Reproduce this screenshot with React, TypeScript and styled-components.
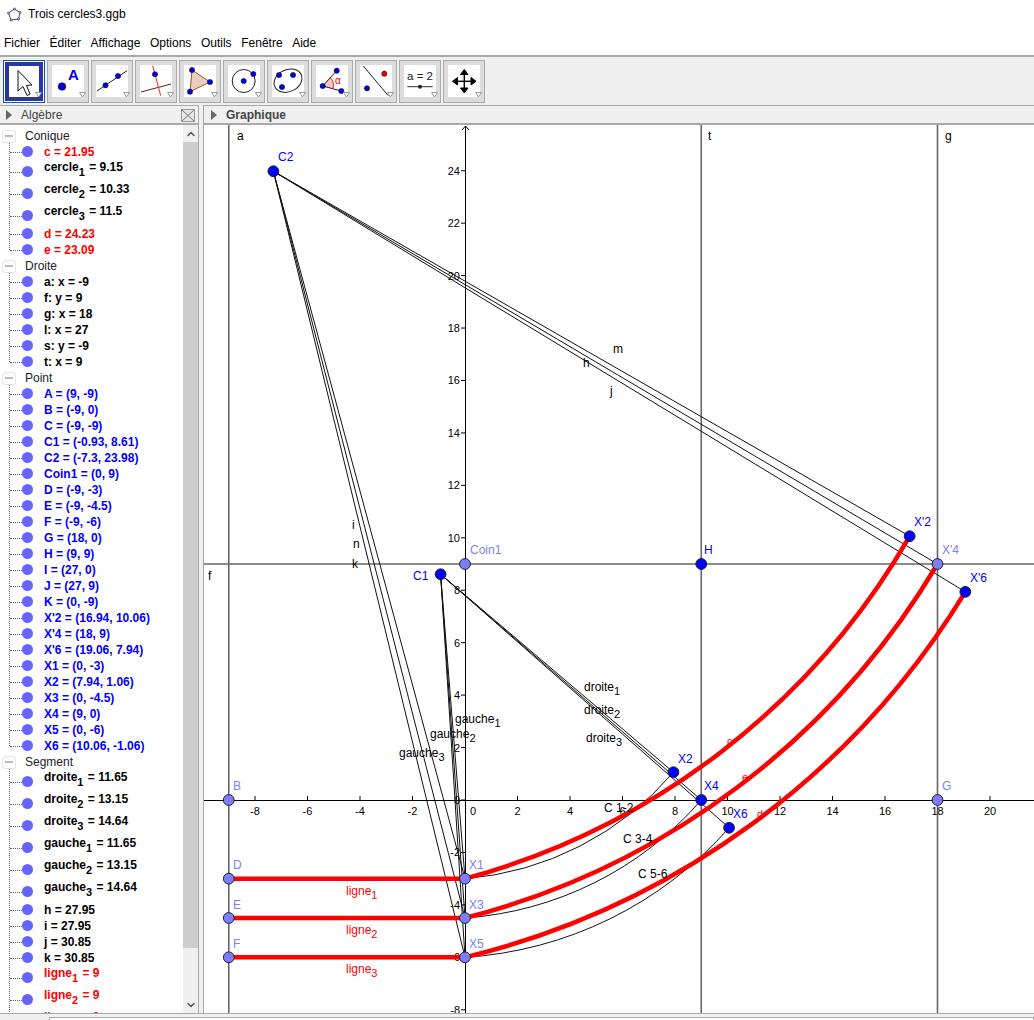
import { type FC, type ReactNode } from "react";
import styled, { createGlobalStyle } from "styled-components";
import { ChevronDown, ChevronUp } from "lucide-react";

const GlobalStyle = createGlobalStyle`
  html, body {
    margin: 0;
    padding: 0;
    background: #fff;
    overflow: hidden;
  }
  * { box-sizing: border-box; }
`;

const Window = styled.div`
  width: 1034px;
  height: 1020px;
  display: flex;
  flex-direction: column;
  font-family: "Liberation Sans", Arial, sans-serif;
  font-size: 12px;
  color: #000;
  overflow: hidden;
`;

const TitleBar = styled.div`
  height: 28px;
  padding: 0 0 0 7px;
  display: flex;
  align-items: center;
  gap: 6px;
  background: #fff;
`;

const MenuBar = styled.div`
  height: 27px;
  padding: 2px 0 0 4px;
  display: flex;
  align-items: center;
  gap: 9.6px;
  background: #fff;
`;

const Toolbar = styled.div`
  height: 50px;
  padding: 3px 0 0 3px;
  display: flex;
  gap: 2px;
  background: #f0f0f0;
  border-top: 2px solid #a9a9a9;
`;

const ToolButton = styled.div<{ $selected?: boolean }>`
  width: 42px;
  height: 43px;
  padding: 4px;
  background: ${(p) => (p.$selected ? "#fff" : "#dcdcdc")};
  border: 1px solid ${(p) => (p.$selected ? "#0a5a9c" : "#aaa")};
  ${(p) => p.$selected && "box-shadow: inset 0 0 0 1px #fff, inset 0 0 0 5px #2b35a8;"}

  svg {
    display: block;
    width: 32px;
    height: 32px;
    overflow: visible;
    background: ${(p) => (p.$selected ? "transparent" : "#fff")};
  }
`;

const Panels = styled.div`
  flex: 1;
  min-height: 0;
  display: flex;
  background: #f0f0f0;
`;

const AlgebraPanel = styled.div`
  width: 199px;
  display: flex;
  flex-direction: column;
  border-right: 1px solid #a9a9a9;
`;

const GraphicPanel = styled.div`
  flex: 1;
  margin-left: 4px;
  display: flex;
  flex-direction: column;
  border-left: 1px solid #a9a9a9;
  min-width: 0;
`;

const PanelHeader = styled.div<{ $indent: number; $bold?: boolean }>`
  height: 20px;
  padding: 1px 0 0 ${(p) => p.$indent}px;
  display: flex;
  align-items: center;
  gap: 9px;
  flex-shrink: 0;
  background: #f0f0f0;
  color: #444;
  font-weight: ${(p) => (p.$bold ? "bold" : "normal")};
  border-top: 1px solid #a9a9a9;
  border-bottom: 2px solid #a9a9a9;
`;

const Caret = styled.span`
  width: 0;
  height: 0;
  border-top: 5px solid transparent;
  border-bottom: 5px solid transparent;
  border-left: 6px solid #666;
`;

const CloseBox = styled.span`
  margin-left: auto;
  margin-right: 3px;
  width: 14px;
  height: 13px;
  border: 1px solid #999;
  background: #e6e6e6;
  display: flex;

  svg { width: 12px; height: 11px; }
`;

const AlgebraBody = styled.div`
  flex: 1;
  min-height: 0;
  display: flex;
  background: #fff;
`;

const Tree = styled.div`
  flex: 1;
  padding-top: 3px;
  overflow: hidden;
`;

const Group = styled.div<{ $open?: boolean }>`
  position: relative;

  &::before {
    content: "";
    position: absolute;
    left: 9px;
    top: 14px;
    bottom: ${(p) => (p.$open ? "0" : "8px")};
    border-left: 1px dotted #666;
  }
`;

const GroupRow = styled.div`
  height: 16px;
  display: flex;
  align-items: center;
  padding-left: 2px;
  color: #222;
`;

const Toggle = styled.span`
  position: relative;
  width: 14px;
  height: 13px;
  margin-right: 9px;
  background: #fff;
  border: 1px solid #e4e4e4;
  border-radius: 3px;
  display: flex;
  align-items: center;
  justify-content: center;

  &::after {
    content: "";
    width: 8px;
    height: 2px;
    background: #bbb;
  }
`;

const Row = styled.div<{ $tall?: boolean }>`
  height: ${(p) => (p.$tall ? 22 : 16)}px;
  padding-left: 10px;
  display: flex;
  align-items: flex-start;
`;

const Connector = styled.span<{ $tall?: boolean }>`
  width: 12px;
  margin-top: ${(p) => (p.$tall ? 12 : 8)}px;
  border-top: 1px dotted #666;
`;

const Bullet = styled.span<{ $tall?: boolean }>`
  width: 11px;
  height: 11px;
  margin-top: ${(p) => (p.$tall ? 6 : 2)}px;
  border-radius: 50%;
  background: #6464ff;
  flex-shrink: 0;
`;

const RowLabel = styled.span<{ $color: string; $tall?: boolean }>`
  margin: ${(p) => (p.$tall ? "-1px" : "0")} 0 0 11px;
  line-height: 16px;
  font-weight: bold;
  white-space: nowrap;
  color: ${(p) => p.$color};

  sub {
    font-size: 11px;
    line-height: 0;
    vertical-align: -5px;
    margin-right: 1px;
  }
`;

const ScrollTrack = styled.div`
  width: 15px;
  flex-shrink: 0;
  display: flex;
  flex-direction: column;
  background: #f0f0f0;
`;

const ScrollArrow = styled.div<{ $end?: boolean }>`
  height: 17px;
  display: flex;
  align-items: center;
  justify-content: center;
  margin-top: ${(p) => (p.$end ? "auto" : "0")};
  color: #555;
`;

const ScrollThumb = styled.div`
  height: 806px;
  background: #cdcdcd;
`;

const Canvas = styled.svg`
  display: block;
  flex: 1;
  min-height: 0;
  width: 100%;
  background: #fff;
  font-family: "Liberation Sans", Arial, sans-serif;
  font-size: 12px;
`;

const BottomBar = styled.div`
  height: 7px;
  flex-shrink: 0;
  padding: 3px 0 0 49px;
  background: #f0f0f0;
  border-top: 1px solid #a9a9a9;
`;

const InputField = styled.div`
  height: 100%;
  background: #fff;
  border: 1px solid #aaa;
  border-bottom: none;
`;

const BLACK = "#000";
const RED = "#ff0000";
const BLUE = "#0000ff";

type Item = { text: string; sub?: string; rest?: string; color: string };

const plain = (text: string, color: string): Item => ({ text, color });
const indexed = (text: string, sub: string, rest: string, color: string): Item => ({ text, sub, rest, color });

const groups: { title: string; open?: boolean; items: Item[] }[] = [
  {
    title: "Conique",
    items: [
      plain("c = 21.95", RED),
      indexed("cercle", "1", " = 9.15", BLACK),
      indexed("cercle", "2", " = 10.33", BLACK),
      indexed("cercle", "3", " = 11.5", BLACK),
      plain("d = 24.23", RED),
      plain("e = 23.09", RED),
    ],
  },
  {
    title: "Droite",
    items: ["a: x = -9", "f: y = 9", "g: x = 18", "l: x = 27", "s: y = -9", "t: x = 9"].map((t) => plain(t, BLACK)),
  },
  {
    title: "Point",
    items: [
      "A = (9, -9)", "B = (-9, 0)", "C = (-9, -9)", "C1 = (-0.93, 8.61)", "C2 = (-7.3, 23.98)",
      "Coin1 = (0, 9)", "D = (-9, -3)", "E = (-9, -4.5)", "F = (-9, -6)", "G = (18, 0)",
      "H = (9, 9)", "I = (27, 0)", "J = (27, 9)", "K = (0, -9)", "X'2 = (16.94, 10.06)",
      "X'4 = (18, 9)", "X'6 = (19.06, 7.94)", "X1 = (0, -3)", "X2 = (7.94, 1.06)", "X3 = (0, -4.5)",
      "X4 = (9, 0)", "X5 = (0, -6)", "X6 = (10.06, -1.06)",
    ].map((t) => plain(t, BLUE)),
  },
  {
    title: "Segment",
    open: true,
    items: [
      indexed("droite", "1", " = 11.65", BLACK),
      indexed("droite", "2", " = 13.15", BLACK),
      indexed("droite", "3", " = 14.64", BLACK),
      indexed("gauche", "1", " = 11.65", BLACK),
      indexed("gauche", "2", " = 13.15", BLACK),
      indexed("gauche", "3", " = 14.64", BLACK),
      plain("h = 27.95", BLACK),
      plain("i = 27.95", BLACK),
      plain("j = 30.85", BLACK),
      plain("k = 30.85", BLACK),
      indexed("ligne", "1", " = 9", RED),
      indexed("ligne", "2", " = 9", RED),
      indexed("ligne", "3", " = 9", RED),
    ],
  },
];

const ToolDot: FC<{ x: number; y: number; r?: number; fill?: string }> = ({ x, y, r = 2.6, fill = "#0000e6" }) => (
  <circle cx={x} cy={y} r={r} fill={fill} stroke="#111" strokeWidth={0.6} />
);

const toolIcons: ReactNode[] = [
  <polygon key="move" points="10,5.5 10,26 15,21.5 19,30.5 22,29 18.5,20.5 24,20" fill="#fff" stroke="#111" strokeWidth={1} />,
  <g key="point">
    <ToolDot x={10} y={21.5} r={3.8} />
    <text x={16} y={15} fill="#0000ff" fontSize={15} fontWeight="bold" fontFamily="Liberation Sans">A</text>
  </g>,
  <g key="line">
    <line x1={1} y1={26} x2={31} y2={5.7} stroke="#222" />
    <ToolDot x={9.5} y={20.3} />
    <ToolDot x={22} y={11} />
  </g>,
  <g key="perp">
    <line x1={1} y1={27} x2={31} y2={19} stroke="#522" />
    <line x1={12.7} y1={0.7} x2={20.7} y2={30.7} stroke="#f22" />
    <ToolDot x={15} y={9.3} />
  </g>,
  <g key="polygon">
    <polygon points="8,5 26,17 6,26.7" fill="#e9cdbd" stroke="#a0522d" />
    <ToolDot x={8} y={5} />
    <ToolDot x={26} y={17} />
    <ToolDot x={6} y={26.7} />
  </g>,
  <g key="circle">
    <circle cx={15.7} cy={16} r={11.5} fill="none" stroke="#222" />
    <ToolDot x={15.7} y={16} />
    <ToolDot x={25.3} y={9} />
  </g>,
  <g key="conic">
    <ellipse cx={16} cy={15.7} rx={14.5} ry={11} transform="rotate(-25 16 15.7)" fill="none" stroke="#222" />
    <ToolDot x={7} y={10} />
    <ToolDot x={21} y={10} />
    <ToolDot x={10} y={22} />
  </g>,
  <g key="angle">
    <path d="M6.7 21 L14 12.5 A 11 11 0 0 1 17 23.8 Z" fill="#f6c4c4" />
    <path d="M20.7 5.7 L6.7 21 L25.3 26" fill="none" stroke="#222" />
    <path d="M14 12.5 A 11 11 0 0 1 17 23.8" fill="none" stroke="#f22" />
    <text x={19} y={19} fill="#e00" fontSize={10} fontFamily="Liberation Sans">α</text>
    <ToolDot x={6.7} y={21} />
    <ToolDot x={20.7} y={5.7} />
    <ToolDot x={25.3} y={26} />
  </g>,
  <g key="relation">
    <line x1={3.3} y1={1} x2={28.3} y2={30.7} stroke="#222" />
    <ToolDot x={24.3} y={8.7} fill="#e00" />
    <ToolDot x={7} y={23.3} />
  </g>,
  <g key="slider">
    <text x={16} y={15} textAnchor="middle" fill="#222" fontSize={11.5} fontFamily="Liberation Sans">a = 2</text>
    <line x1={3.3} y1={21.7} x2={28.7} y2={21.7} stroke="#333" />
    <circle cx={16} cy={21.7} r={2} fill="#222" />
  </g>,
  <g key="pan" fill="#000" stroke="#000">
    <line x1={16.3} y1={7} x2={16.3} y2={26} strokeWidth={1.4} />
    <line x1={7} y1={16.3} x2={26} y2={16.3} strokeWidth={1.4} />
    <polygon points="16.3,4.5 12.5,9.5 20,9.5" />
    <polygon points="16.3,28 12.5,23 20,23" />
    <polygon points="4.5,16.3 9.5,12.5 9.5,20" />
    <polygon points="28,16.3 23,12.5 23,20" />
  </g>,
];

// GeoGebra view: 26.25 px for one unit, origin at (465, 800)
const sx = (x: number) => 465 + 26.25 * x;
const sy = (y: number) => 800 - 26.22 * y;

type Pt = { x: number; y: number };
const at = (x: number, y: number): Pt => ({ x: sx(x), y: sy(y) });

const C1 = at(-0.93, 8.61);
const C2 = at(-7.3, 23.98);
const X1 = at(0, -3);
const X2 = at(7.94, 1.06);
const X3 = at(0, -4.5);
const X4 = at(9, 0);
const X5 = at(0, -6);
const X6 = at(10.06, -1.06);
const XP2 = at(16.94, 10.06);
const XP4 = at(18, 9);
const XP6 = at(19.06, 7.94);
const D = at(-9, -3);
const E = at(-9, -4.5);
const F = at(-9, -6);

const dist = (a: Pt, b: Pt) => Math.hypot(a.x - b.x, a.y - b.y);
const arc = (from: Pt, to: Pt, center: Pt) => {
  const r = dist(from, center);
  return `M${from.x} ${from.y} A${r} ${r} 0 0 0 ${to.x} ${to.y}`;
};

const thinLines: [Pt, Pt][] = [
  [C2, XP2], [C2, XP4], [C2, XP6], [C2, X1], [C2, X3], [C2, X5],
  [C1, X2], [C1, X4], [C1, X6], [C1, X1], [C1, X3], [C1, X5],
];

const points: { p: Pt; free?: boolean; label: string; lx: number; ly: number }[] = [
  { p: at(-9, 0), label: "B", lx: 233, ly: 790 },
  { p: D, label: "D", lx: 233, ly: 869 },
  { p: E, label: "E", lx: 233, ly: 909 },
  { p: F, label: "F", lx: 233, ly: 948 },
  { p: X1, label: "X1", lx: 469, ly: 869 },
  { p: X3, label: "X3", lx: 469, ly: 909 },
  { p: X5, label: "X5", lx: 469, ly: 948 },
  { p: at(18, 0), label: "G", lx: 942, ly: 790 },
  { p: at(0, 9), label: "Coin1", lx: 470, ly: 554 },
  { p: XP4, label: "X'4", lx: 942, ly: 554 },
  { p: at(9, 9), free: true, label: "H", lx: 704, ly: 554 },
  { p: C1, free: true, label: "C1", lx: 413, ly: 580 },
  { p: C2, free: true, label: "C2", lx: 278, ly: 161 },
  { p: X2, free: true, label: "X2", lx: 678, ly: 763 },
  { p: X4, free: true, label: "X4", lx: 704, ly: 790 },
  { p: X6, free: true, label: "X6", lx: 733, ly: 818 },
  { p: XP2, free: true, label: "X'2", lx: 914, ly: 526 },
  { p: XP6, free: true, label: "X'6", lx: 970, ly: 582 },
];

const blackLabels: [string, number, number][] = [
  ["a", 237, 140], ["t", 708, 140], ["g", 945, 140], ["f", 208, 580],
  ["m", 613, 353], ["h", 583, 367], ["j", 610, 395],
  ["i", 352, 529], ["n", 353, 548], ["k", 352, 568],
  ["C 1-2", 604, 812], ["C 3-4", 623, 843], ["C 5-6", 638, 878],
];

const subLabels: { name: string; sub: string; x: number; y: number; color: string }[] = [
  { name: "droite", sub: "1", x: 584, y: 691, color: "#000" },
  { name: "droite", sub: "2", x: 584, y: 714, color: "#000" },
  { name: "droite", sub: "3", x: 586, y: 742, color: "#000" },
  { name: "gauche", sub: "1", x: 455, y: 723, color: "#000" },
  { name: "gauche", sub: "2", x: 430, y: 738, color: "#000" },
  { name: "gauche", sub: "3", x: 399, y: 757, color: "#000" },
  { name: "ligne", sub: "1", x: 346, y: 895, color: "#f00" },
  { name: "ligne", sub: "2", x: 346, y: 934, color: "#f00" },
  { name: "ligne", sub: "3", x: 346, y: 973, color: "#f00" },
];

const xTicks = [-8, -6, -4, -2, 2, 4, 6, 8, 10, 12, 14, 16, 18, 20];
const yTicks = [24, 22, 20, 18, 16, 14, 12, 10, 8, 6, 4, 2, 0, -2, -4, -6, -8];

const Graph: FC = () => (
  <Canvas viewBox="204 125 830 888" preserveAspectRatio="xMinYMin slice">
    {/* grid objects */}
    <g stroke="#666" strokeWidth={1.6}>
      <line x1={sx(-9)} y1={124} x2={sx(-9)} y2={1013} />
      <line x1={sx(9)} y1={124} x2={sx(9)} y2={1013} />
      <line x1={sx(18)} y1={124} x2={sx(18)} y2={1013} />
      <line x1={204} y1={sy(9)} x2={1034} y2={sy(9)} />
    </g>

    {/* axes */}
    <g stroke="#000" strokeWidth={1} fill="none">
      <line x1={204} y1={800.5} x2={1034} y2={800.5} />
      <line x1={465.5} y1={126} x2={465.5} y2={1013} />
      <path d="M462 130 L465.5 126 L469 130" />
      {xTicks.map((t) => (
        <line key={t} x1={sx(t)} y1={796} x2={sx(t)} y2={800} />
      ))}
      {yTicks.map((t) => (
        <line key={t} x1={461} y1={sy(t)} x2={465} y2={sy(t)} />
      ))}
    </g>
    <g fontSize={11} fill="#000">
      {xTicks.map((t) => (
        <text key={t} x={sx(t)} y={815} textAnchor="middle">{t}</text>
      ))}
      <text x={473} y={815} textAnchor="middle">0</text>
      {yTicks.map((t) => (
        <text key={t} x={460} y={sy(t) + 4} textAnchor="end">{t}</text>
      ))}
    </g>

    {/* segments */}
    <g stroke="#111" strokeWidth={1} fill="none">
      {thinLines.map(([a, b], i) => (
        <line key={i} x1={a.x} y1={a.y} x2={b.x} y2={b.y} />
      ))}
      <path d={arc(X1, X2, C1)} />
      <path d={arc(X3, X4, C1)} />
      <path d={arc(X5, X6, C1)} />
    </g>

    {/* thick red arcs and lines */}
    <g stroke="#ff0000" strokeWidth={4.5} fill="none">
      <path d={arc(X1, XP2, C2)} />
      <path d={arc(X3, XP4, C2)} />
      <path d={arc(X5, XP6, C2)} />
      <line x1={D.x} y1={D.y} x2={X1.x} y2={X1.y} />
      <line x1={E.x} y1={E.y} x2={X3.x} y2={X3.y} />
      <line x1={F.x} y1={F.y} x2={X5.x} y2={X5.y} />
    </g>

    <g fill="#f00" fontSize={11}>
      <text x={727} y={745}>c</text>
      <text x={742} y={781}>e</text>
      <text x={757} y={818}>d</text>
    </g>

    <g fill="#000">
      {blackLabels.map(([t, x, y]) => (
        <text key={t} x={x} y={y}>{t}</text>
      ))}
    </g>
    {subLabels.map((l) => (
      <text key={l.name + l.sub} x={l.x} y={l.y} fill={l.color}>
        {l.name}
        <tspan dy={4} fontSize={11}>{l.sub}</tspan>
      </text>
    ))}

    {points.map(({ p, free, label, lx, ly }) => (
      <g key={label}>
        <circle cx={p.x} cy={p.y} r={5.4} fill={free ? "#0000ff" : "#7d7dff"} stroke="#222" strokeWidth={1} />
        <text x={lx} y={ly} fill={free ? "#0000ff" : "#7d7dff"}>{label}</text>
      </g>
    ))}
  </Canvas>
);

const AppIcon: FC = () => (
  <svg width="15" height="15" viewBox="0 0 15 15">
    <polygon points="7.5,2 13,5.5 11.5,12 4,13 1.5,6" fill="none" stroke="#445" strokeWidth={1} />
    {[[7.5, 2], [13, 5.5], [11.5, 12], [4, 13], [1.5, 6]].map(([x, y]) => (
      <circle key={x} cx={x} cy={y} r={1.2} fill="#99b" stroke="#334" strokeWidth={0.4} />
    ))}
  </svg>
);

const menus = ["Fichier", "Éditer", "Affichage", "Options", "Outils", "Fenêtre", "Aide"];

const App: FC = () => (
  <Window>
    <GlobalStyle />
    <TitleBar>
      <AppIcon />
      <span>Trois cercles3.ggb</span>
    </TitleBar>
    <MenuBar>
      {menus.map((m) => (
        <span key={m}>{m}</span>
      ))}
    </MenuBar>
    <Toolbar>
      {toolIcons.map((icon, i) => (
        <ToolButton key={i} $selected={i === 0}>
          <svg viewBox="0 0 32 32">
            {icon}
            <polygon points="27.5,27.5 33.5,27.5 30.5,32" fill="#fff" stroke="#999" />
          </svg>
        </ToolButton>
      ))}
    </Toolbar>
    <Panels>
      <AlgebraPanel>
        <PanelHeader $indent={6}>
          <Caret />
          <span>Algèbre</span>
          <CloseBox>
            <svg viewBox="0 0 12 11">
              <path d="M0 0 L12 11 M12 0 L0 11" stroke="#777" strokeWidth={1} />
            </svg>
          </CloseBox>
        </PanelHeader>
        <AlgebraBody>
          <Tree>
            {groups.map((g) => (
              <Group key={g.title} $open={g.open}>
                <GroupRow>
                  <Toggle />
                  {g.title}
                </GroupRow>
                {g.items.map((item) => {
                  const tall = Boolean(item.sub);
                  return (
                    <Row key={item.text + (item.sub ?? "")} $tall={tall}>
                      <Connector $tall={tall} />
                      <Bullet $tall={tall} />
                      <RowLabel $color={item.color} $tall={tall}>
                        {item.text}
                        {item.sub && <sub>{item.sub}</sub>}
                        {item.rest}
                      </RowLabel>
                    </Row>
                  );
                })}
              </Group>
            ))}
          </Tree>
          <ScrollTrack>
            <ScrollArrow>
              <ChevronUp size={12} strokeWidth={3} />
            </ScrollArrow>
            <ScrollThumb />
            <ScrollArrow $end>
              <ChevronDown size={12} strokeWidth={3} />
            </ScrollArrow>
          </ScrollTrack>
        </AlgebraBody>
      </AlgebraPanel>
      <GraphicPanel>
        <PanelHeader $indent={7} $bold>
          <Caret />
          <span>Graphique</span>
        </PanelHeader>
        <Graph />
      </GraphicPanel>
    </Panels>
    <BottomBar>
      <InputField />
    </BottomBar>
  </Window>
);

export default App;
